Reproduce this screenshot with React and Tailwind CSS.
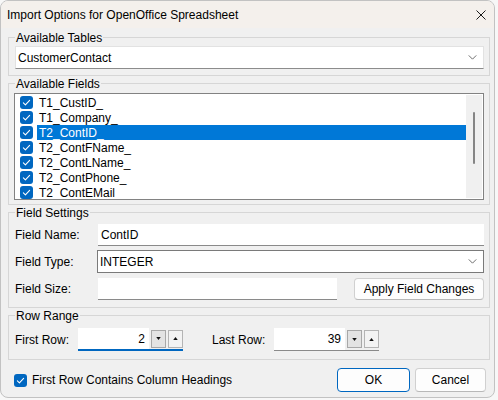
const font = "font-['Liberation_Sans',Arial,sans-serif]";

const fields = [
  "T1_CustID_",
  "T1_Company_",
  "T2_ContID_",
  "T2_ContFName_",
  "T2_ContLName_",
  "T2_ContPhone_",
  "T2_ContEMail",
];

function Check() {
  return (
    <span className="flex h-[13px] w-[13px] shrink-0 items-center justify-center rounded-[3px] bg-[#0067c0]">
      <svg viewBox="0 0 12 12" className="h-[11px] w-[11px]">
        <path d="M2.6 6.3l2.2 2.2 4.6-4.8" fill="none" stroke="white" strokeWidth="1.2" strokeLinecap="round" strokeLinejoin="round" />
      </svg>
    </span>
  );
}

function Chevron() {
  return (
    <svg viewBox="0 0 10 6" className="h-[5px] w-[9px]">
      <path d="M0.5 0.5L5 5l4.5-4.5" fill="none" stroke="#505050" strokeWidth="1" />
    </svg>
  );
}

function Group({ title, className, children }) {
  return (
    <fieldset className={`border border-[#d6d6d6] pl-[6px] pr-[5px] ${className}`}>
      <legend className="px-[1px] pt-[2px] leading-[15px]">{title}</legend>
      {children}
    </fieldset>
  );
}

function Spin({ value, focused }) {
  return (
    <div className={`flex h-[23px] items-center ${focused ? "border-b-2 border-[#0067c0]" : "border-b border-[#8a8a8a]"}`}>
      <div className="flex h-full w-[71px] items-center justify-end bg-white pr-[4px]">{value}</div>
      <div className="ml-[2px] flex h-[18px] w-[15px] items-center justify-center border border-[#a8a8a8] bg-[#e3e3e3]">
        <svg viewBox="0 0 6 4" className="h-[3px] w-[5px]"><path d="M0 0h6L3 4z" fill="#111" /></svg>
      </div>
      <div className="ml-[2px] flex h-[18px] w-[15px] items-center justify-center border border-[#b4b4b4] bg-[#f3f3f3]">
        <svg viewBox="0 0 6 4" className="h-[3px] w-[5px]"><path d="M0 4h6L3 0z" fill="#111" /></svg>
      </div>
    </div>
  );
}

export default function App() {
  return (
    <div className={`h-[400px] w-[498px] bg-[#f7f7f7] text-[12px] text-black ${font}`}>
      <div className="flex h-[398px] w-[495px] flex-col overflow-hidden rounded-[8px] border border-[#c2c2c2] bg-[#f0f0f0]">
        <div className="flex h-[27px] shrink-0 items-center justify-between bg-[#f4f0ec] pl-[6px] pr-[8px]">
          <span>Import Options for OpenOffice Spreadsheet</span>
          <svg viewBox="0 0 10 10" className="h-[10px] w-[10px]">
            <path d="M0.5 0.5l9 9M9.5 0.5l-9 9" stroke="#1a1a1a" strokeWidth="1" />
          </svg>
        </div>

        <div className="flex flex-col pl-[7px] pr-[4px]">
          <Group title="Available Tables" className="mt-[1px] pb-[6px]">
            <div className="flex h-[23px] items-center justify-between border border-[#e2e2e2] border-b-[#8c8c8c] bg-white pl-[2px] pr-[6px]">
              <span>CustomerContact</span>
              <Chevron />
            </div>
          </Group>

          <Group title="Available Fields" className="-mt-[1px] pb-[4px]">
            <div className="-ml-[1px] mt-[1px] flex h-[107px] border border-[#828282] bg-white">
              <div className="flex-1 overflow-hidden pt-[1px]">
                {fields.map((f, i) => (
                  <div key={f} className="flex h-[15px] items-center pl-[5px]">
                    <Check />
                    <span className={`ml-[4px] flex h-full flex-1 items-center pl-[2px] ${i === 2 ? "bg-[#0078d7] text-white" : ""}`}>{f}</span>
                  </div>
                ))}
              </div>
              <div className="my-[1px] mr-[1px] flex w-[16px] justify-center bg-[#f0f0f0] pt-[17px]">
                <div className="h-[52px] w-[2px] rounded-full bg-[#858585]" />
              </div>
            </div>
          </Group>

          <Group title="Field Settings" className="-mt-[1px] pb-[7px] pl-[5px]">
            <div className="mt-[3px] flex flex-col">
              <div className="flex h-[22px] items-center">
                <span className="w-[83px]">Field Name:</span>
                <div className="flex h-full flex-1 items-center border-b border-[#8a8a8a] bg-white pl-[3px]">ContID</div>
              </div>
              <div className="mt-[4px] flex h-[23px] items-center">
                <span className="w-[82px]">Field Type:</span>
                <div className="flex h-full flex-1 items-center justify-between border border-[#7a7a7a] bg-white pl-[2px] pr-[6px]">
                  <span>INTEGER</span>
                  <Chevron />
                </div>
              </div>
              <div className="mt-[5px] flex h-[22px] items-center">
                <span className="w-[83px]">Field Size:</span>
                <div className="h-full w-[239px] border-b border-[#8a8a8a] bg-white" />
                <button className="ml-auto flex h-full w-[130px] items-center justify-center rounded-[4px] border border-[#d0d0d0] border-b-[#b8b8b8] bg-[#fdfdfd]">
                  Apply Field Changes
                </button>
              </div>
            </div>
          </Group>

          <Group title="Row Range" className="-mt-[1px] pb-[8px] pl-[5px]">
            <div className="mt-[4px] flex items-center">
              <span className="w-[63px]">First Row:</span>
              <Spin value="2" focused />
              <span className="ml-[29px] w-[62px]">Last Row:</span>
              <Spin value="39" />
            </div>
          </Group>

          <div className="mt-[8px] flex items-center">
            <div className="ml-[6px] flex items-center">
              <Check />
              <span className="ml-[5px]">First Row Contains Column Headings</span>
            </div>
            <button className="ml-auto flex h-[24px] w-[73px] items-center justify-center rounded-[4px] border border-[#0067c0] bg-[#fdfdfd]">OK</button>
            <button className="ml-[5px] mr-[4px] flex h-[24px] w-[71px] items-center justify-center rounded-[4px] border border-[#d0d0d0] border-b-[#b8b8b8] bg-[#fdfdfd]">Cancel</button>
          </div>
        </div>
      </div>
    </div>
  );
}
